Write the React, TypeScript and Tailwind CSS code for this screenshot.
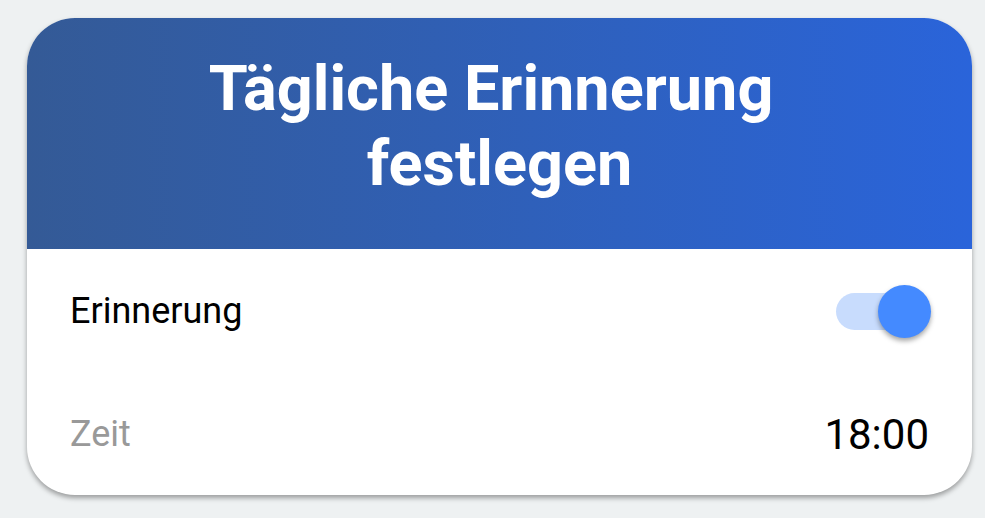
export default function App() {
  return (
    <div
      className="min-h-screen w-full bg-[#eef1f2] pl-[27px] pt-[18px]"
      style={{ fontFamily: "Roboto, 'Noto Sans', sans-serif" }}
    >
      <div className="w-[945px] overflow-hidden rounded-[48px] bg-white shadow-[0_3px_5px_rgba(0,0,0,0.35)]">
        {/* Header */}
        <div className="h-[231px] bg-gradient-to-r from-[#345a96] to-[#2a64da] px-10 pt-[33px]">
          <h1 className="text-center text-[63px] font-bold leading-[75px] text-white">
            <span className="inline-block pr-[17px]">Tägliche Erinnerung</span>
            <br />
            festlegen
          </h1>
        </div>

        {/* Body */}
        <div className="flex flex-col px-[43px]">
          <div className="flex h-[124px] items-center justify-between">
            <span className="text-[36px] text-black">Erinnerung</span>
            <div className="relative mr-[-2px] h-[37px] w-[95px]">
              <div className="absolute left-0 top-0 h-[37px] w-[80px] rounded-full bg-[#c8dcfd]" />
              <div className="absolute right-0 top-[-8px] h-[53px] w-[53px] rounded-full bg-[#448aff] shadow-[0_3px_5px_rgba(0,0,0,0.35)]" />
            </div>
          </div>
          <div className="flex h-[122px] items-center justify-between">
            <span className="text-[36px] text-[#999999]">Zeit</span>
            <span className="text-[42px] text-black">18:00</span>
          </div>
        </div>
      </div>
    </div>
  )
}
